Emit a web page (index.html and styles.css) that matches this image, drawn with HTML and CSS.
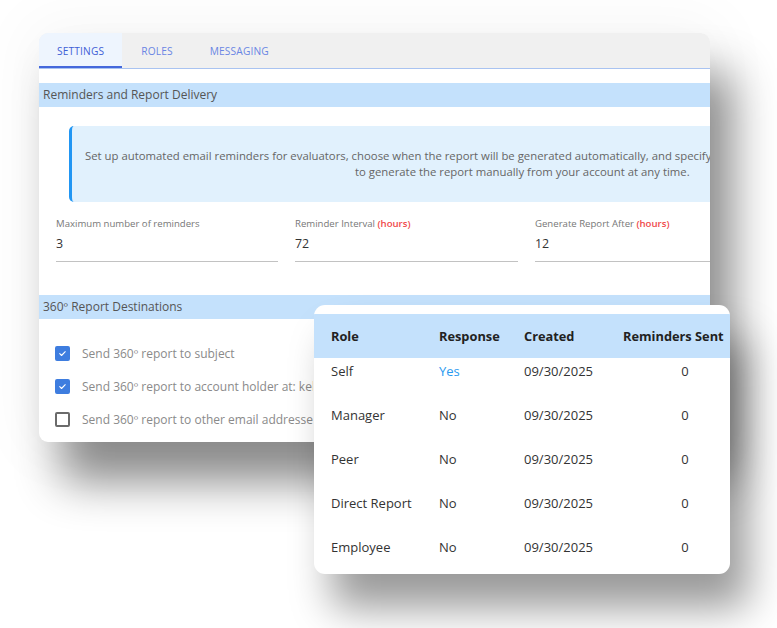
FILE: index.html
```html
<!DOCTYPE html>
<html lang="en">
<head>
<meta charset="utf-8">
<title>360 Settings</title>
<link rel="stylesheet" href="styles.css">
</head>
<body>
<div class="stage">
  <section class="settings-card">
    <nav class="tabs">
      <div class="tab active">SETTINGS</div>
      <div class="tab">ROLES</div>
      <div class="tab">MESSAGING</div>
    </nav>
    <div class="content">
      <div class="section-head">Reminders and Report Delivery</div>
      <div class="info">
        <span class="info-line first">Set up automated email reminders for evaluators, choose when the report will be generated automatically, and specify</span>
        <span class="info-line second">to generate the report manually from your account at any time.</span>
      </div>
      <div class="fields">
        <div class="field">
          <div class="field-label">Maximum number of reminders</div>
          <div class="field-input">3</div>
        </div>
        <div class="field">
          <div class="field-label">Reminder Interval <span class="unit">(hours)</span></div>
          <div class="field-input">72</div>
        </div>
        <div class="field">
          <div class="field-label">Generate Report After <span class="unit">(hours)</span></div>
          <div class="field-input">12</div>
        </div>
      </div>
      <div class="section-head second-head">360º Report Destinations</div>
      <ul class="checks">
        <li class="check-row"><span class="box checked"><svg viewBox="0 0 16 16" width="16" height="16"><path d="M4 8.3l2.6 2.6L12 5.4" fill="none" stroke="#fff" stroke-width="1.6" stroke-linecap="round" stroke-linejoin="round"/></svg></span><span class="check-label">Send 360º report to subject</span></li>
        <li class="check-row"><span class="box checked"><svg viewBox="0 0 16 16" width="16" height="16"><path d="M4 8.3l2.6 2.6L12 5.4" fill="none" stroke="#fff" stroke-width="1.6" stroke-linecap="round" stroke-linejoin="round"/></svg></span><span class="check-label">Send 360º report to account holder at: kelly@example.com</span></li>
        <li class="check-row"><span class="box"></span><span class="check-label">Send 360º report to other email addresses</span></li>
      </ul>
    </div>
  </section>

  <section class="table-card">
    <table class="roles">
      <colgroup>
        <col class="c-role"><col class="c-resp"><col class="c-created"><col class="c-sent">
      </colgroup>
      <thead>
        <tr><th>Role</th><th>Response</th><th>Created</th><th>Reminders Sent</th></tr>
      </thead>
      <tbody>
        <tr><td>Self</td><td class="yes">Yes</td><td>09/30/2025</td><td class="num">0</td></tr>
        <tr><td>Manager</td><td>No</td><td>09/30/2025</td><td class="num">0</td></tr>
        <tr><td>Peer</td><td>No</td><td>09/30/2025</td><td class="num">0</td></tr>
        <tr><td>Direct Report</td><td>No</td><td>09/30/2025</td><td class="num">0</td></tr>
        <tr><td>Employee</td><td>No</td><td>09/30/2025</td><td class="num">0</td></tr>
      </tbody>
    </table>
  </section>
</div>
</body>
</html>
```

FILE: styles.css
```css
* { box-sizing: border-box; }

html, body {
  margin: 0;
  padding: 0;
  background: #ffffff;
}

body {
  width: 777px;
  height: 628px;
  overflow: hidden;
  font-family: "Open Sans", "Noto Sans", sans-serif;
  color: #333;
}

.stage {
  position: relative;
  width: 777px;
  height: 628px;
  padding: 33px 0 0 39px;
}

/* ---------- back card ---------- */
.settings-card {
  width: 671px;
  height: 409px;
  background: #fff;
  border-radius: 9px;
  overflow: hidden;
  box-shadow: 22px 40px 45px rgba(0, 0, 0, 0.45), 0 0 60px 14px rgba(0, 0, 0, 0.035);
}

.tabs {
  display: flex;
  height: 36px;
  background: #f0f0f0;
  border-bottom: 1px solid #a9c3f1;
}

.tab {
  display: flex;
  align-items: center;
  padding: 1px 18px 0;
  font-size: 10.2px;
  font-weight: 500;
  letter-spacing: 0.15px;
  color: #6a86e4;
}

.tab.active {
  background: #eef5fe;
  color: #3f5fd6;
  box-shadow: inset 0 -2px 0 #4468dc;
}

.tab + .tab { padding-left: 19px; }

.content {
  padding-top: 14px;
  width: 940px;
}

.section-head {
  height: 24px;
  line-height: 24px;
  padding-left: 4px;
  background: #c4e1fc;
  font-size: 12px;
  color: #555;
  width: 671px;
}

.info {
  margin: 19px 0 0 30px;
  width: 641px;
  height: 76px;
  padding: 22px 0 0 13px;
  background: #e1f1fd;
  border-left: 3px solid #2196f3;
  border-radius: 5px 0 0 5px;
  font-size: 11.35px;
  line-height: 16px;
  color: #666;
  overflow: hidden;
}

.info-line {
  display: block;
  white-space: nowrap;
}

.info-line.second { padding-left: 270px; }

.fields {
  display: grid;
  grid-template-columns: 222px 223px 222px;
  column-gap: 17px;
  padding-left: 17px;
  margin-top: 16px;
}

.field-label {
  height: 12px;
  line-height: 12px;
  font-size: 9.6px;
  color: #777;
  white-space: nowrap;
}

.unit { color: #f0484a; font-weight: 600; }

.field-input {
  margin-top: 2px;
  padding: 3px 0 8px;
  line-height: 18px;
  font-size: 12.4px;
  font-weight: 500;
  color: #333;
  border-bottom: 1px solid #c2c2c2;
}

.second-head { margin-top: 33px; }

.checks {
  list-style: none;
  margin: 0;
  padding: 18px 0 0 16px;
}

.check-row {
  display: flex;
  align-items: center;
  height: 33px;
}

.box {
  width: 15px;
  height: 15px;
  border: 2px solid #6b6b6b;
  border-radius: 2px;
  flex: none;
  display: flex;
  align-items: center;
  justify-content: center;
}

.box.checked {
  background: #3e7ddf;
  border-color: #3e7ddf;
}

.box svg { width: 13px; height: 13px; }

.check-label {
  margin-left: 12px;
  max-width: 231px;
  overflow: hidden;
  font-size: 12px;
  color: #8a8a8a;
  white-space: nowrap;
}

/* ---------- front card ---------- */
.table-card {
  position: absolute;
  left: 314px;
  top: 305px;
  width: 416px;
  height: 269px;
  padding-top: 9px;
  background: #fff;
  border-radius: 11px;
  overflow: hidden;
  box-shadow: 18px 34px 40px rgba(0, 0, 0, 0.40);
}

.roles {
  border-collapse: collapse;
  table-layout: fixed;
  width: 433px;
}

.c-role { width: 125px; }
.c-resp { width: 85px; }
.c-created { width: 99px; }
.c-sent { width: 124px; }

.roles th {
  height: 44px;
  padding: 0;
  background: #c4e1fc;
  text-align: left;
  font-size: 12.8px;
  font-weight: 700;
  color: #222;
  white-space: nowrap;
}

.roles th:first-child,
.roles td:first-child { padding-left: 17px; }

.roles td {
  height: 44px;
  padding: 4px 0 0;
  vertical-align: top;
  line-height: 18px;
  font-size: 13px;
  font-weight: 500;
  color: #333;
  white-space: nowrap;
}

.roles td.yes { color: #2a9af0; }
.roles td.num { text-align: center; }
```
